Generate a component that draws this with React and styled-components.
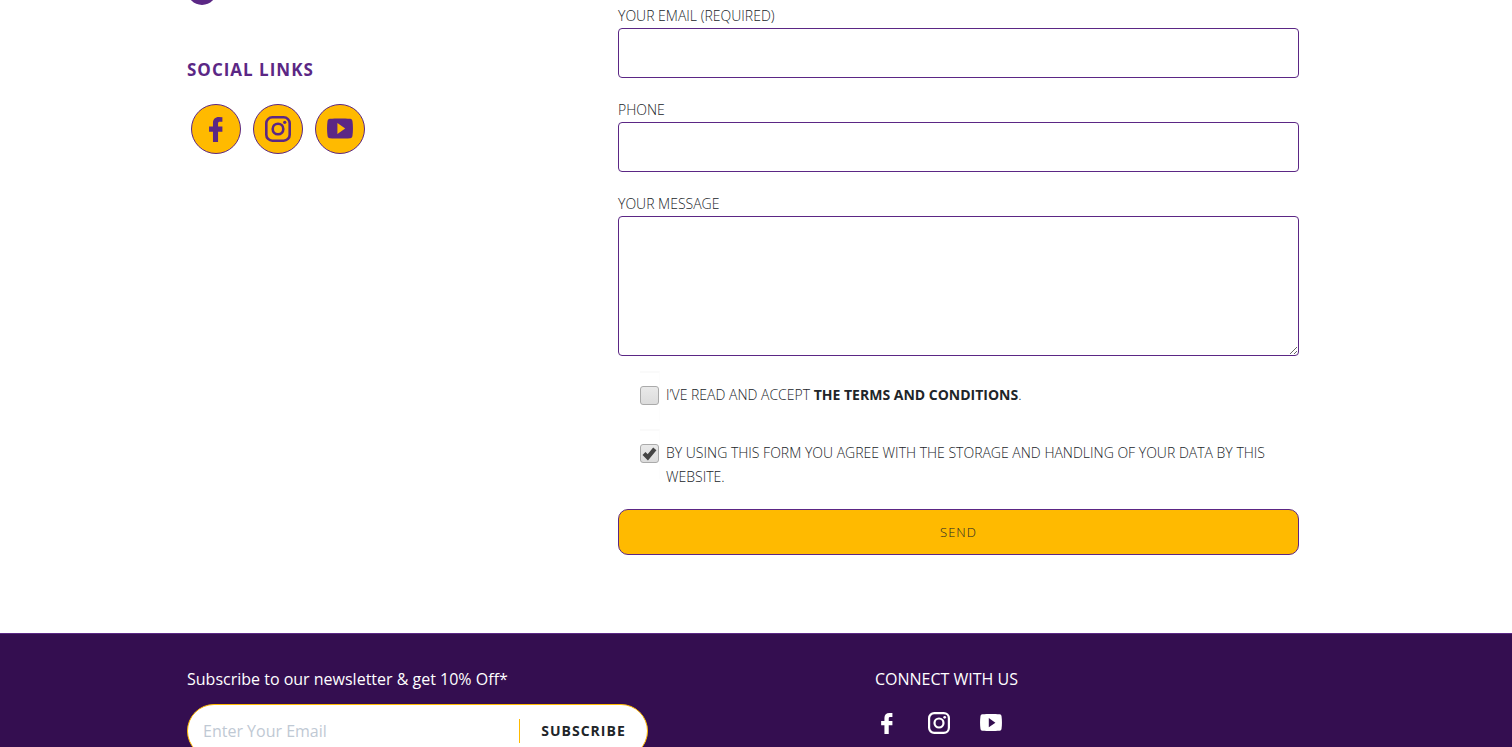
import React, {useState} from 'react';
import styled, {createGlobalStyle} from "styled-components";

const GlobalStyle = createGlobalStyle`
  * {
    box-sizing: border-box;
  }

  body {
    margin: 0;
    background: #fff;
    color: #212529;
    font-family: "Open Sans", sans-serif;
    font-size: 14px;
    line-height: 24px;
  }

  input, textarea, button {
    font: inherit;
    color: inherit;
  }
`;

const Page = styled.div`
  height: 100vh;
  overflow: hidden;
`;

const Container = styled.div`
  max-width: 1138px;
  margin: 0 auto;
`;

const ContactGrid = styled(Container)`
  display: grid;
  grid-template-columns: 431px 1fr;
  padding: 4px 26px 78px 0;
`;

const Aside = styled.aside`
  margin-top: -4px;

  h2 {
    margin: 52px 0 21px;
    color: #5b2785;
    font-size: 17px;
    font-weight: 700;
    line-height: 26px;
    letter-spacing: 1px;
  }
`;

const ContactBadge = styled.div`
  display: flex;
  align-items: flex-end;
  height: 5px;
  overflow: hidden;

  span {
    flex: none;
    width: 30px;
    height: 30px;
    border-radius: 50%;
    background: #5b2785;
  }
`;

const SocialList = styled.div`
  display: flex;
  gap: 12px;
  padding-left: 4px;
`;

const SocialLink = styled.a`
  display: flex;
  align-items: center;
  justify-content: center;
  width: 50px;
  height: 50px;
  border: 1px solid #5b2785;
  border-radius: 50%;
  background: #ffba00;
  color: #5b2785;
`;

const Form = styled.form`
  display: flex;
  flex-direction: column;
  font-weight: 300;
`;

const Field = styled.div`
  display: flex;
  flex-direction: column;
  margin-bottom: ${props => props.$last ? "15px" : "20px"};

  input, textarea {
    display: block;
    width: 100%;
    height: 50px;
    padding: 8px 16px;
    border: 1px solid #5b2785;
    border-radius: 4px;
    background: #fff;
    outline: none;
  }

  textarea {
    height: 140px;
    resize: vertical;
  }
`;

const CheckRow = styled.div`
  display: grid;
  grid-template-columns: 20px 1fr;
  column-gap: 6px;
  margin: 0 20px ${props => props.$last ? "20px" : "22px"} 22px;

  label {
    padding-top: 12px;
  }

  strong {
    font-weight: 700;
  }
`;

const CheckSlot = styled.span`
  position: relative;
  height: 50px;
  margin-bottom: -14px;
  padding-top: 13px;
  border-top: 2px solid #fafafa;
  border-right: 1px solid #fdfdfd;

  input {
    appearance: none;
    display: block;
    width: 19px;
    height: 19px;
    margin: 0;
    border: 1px solid #aaa;
    border-radius: 3px;
    background: linear-gradient(#e9e9e9, #dcdcdc);
  }

  svg {
    position: absolute;
    top: 15px;
    left: 2px;
    pointer-events: none;
  }
`;

const SendButton = styled.button`
  height: 46px;
  border: 1px solid #5b2785;
  border-radius: 10px;
  background: #ffba00;
  font-size: 13px;
  font-weight: 300;
  letter-spacing: 1px;
  cursor: pointer;
`;

const Footer = styled.footer`
  border-top: 1px solid #5b2785;
  background: #340e50;
  color: #fff;
  font-size: 16px;
`;

const FooterGrid = styled(Container)`
  display: grid;
  grid-template-columns: 688px 1fr;
  padding: 33px 0 40px;

  h3 {
    margin: 0;
    font-size: 16px;
    font-weight: 400;
    line-height: 24px;
  }
`;

const Newsletter = styled.form`
  display: flex;
  align-items: center;
  width: 461px;
  height: 54px;
  margin-top: 13px;
  padding-left: 15px;
  border: 1px solid #ffba00;
  border-radius: 27px;
  background: #fff;
  color: #212529;

  input {
    flex: 1;
    min-width: 0;
    height: 24px;
    padding: 0;
    border: 0;
    border-right: 1px solid #ffba00;
    background: none;
    outline: none;

    &::placeholder {
      color: #bfc9d4;
      opacity: 1;
    }
  }

  button {
    width: 127px;
    padding: 0;
    border: 0;
    background: none;
    font-size: 14px;
    font-weight: 700;
    letter-spacing: 1px;
    cursor: pointer;
  }
`;

const FooterSocial = styled.div`
  display: flex;
  gap: 30px;
  margin-top: 21px;
  padding-left: 1px;

  a {
    display: flex;
    color: #fff;
  }
`;

const FacebookIcon = ({size}) => (
    <svg width={size} height={size} viewBox="0 0 24 24" fill="currentColor" aria-hidden="true">
        <path d="M17.900 1.100v4.300h-2.300c-1.300 0-1.700.6-1.700 1.600v2.800h4v4.700h-4V24H9.200v-9.500H5.600V9.800h3.600V6.400C9.200 3 11.300 1 14.600 1z"/>
    </svg>
);

const InstagramIcon = ({size}) => (
    <svg width={size} height={size} viewBox="0 0 24 24" fill="none" stroke="currentColor" strokeWidth="2.4" aria-hidden="true">
        <rect x="1.2" y="1.2" width="21.6" height="21.6" rx="5.6"/>
        <circle cx="12" cy="12" r="4.900"/>
        <circle cx="18.2" cy="5.8" r="1.5" fill="currentColor" stroke="none"/>
    </svg>
);

const YoutubeIcon = ({size}) => (
    <svg width={size} height={size} viewBox="0 0 24 24" fill="currentColor" fillRule="evenodd" aria-hidden="true">
        <path d="M2.600 2.500C8 2.100 16 2.100 21.400 2.500c1.300.1 1.900.8 2.100 2.200.6 4.300.6 9.300 0 13.600-.2 1.400-.8 2.100-2.100 2.200-5.400.4-13.400.4-18.800 0C1.300 20.400.7 19.700.5 18.300c-.6-4.300-.6-9.300 0-13.600C.7 3.300 1.300 2.600 2.600 2.500zM9.600 6.500v10.200l7.200-5.100z"/>
    </svg>
);

const socials = [
    {name: "Facebook", Icon: FacebookIcon},
    {name: "Instagram", Icon: InstagramIcon},
    {name: "YouTube", Icon: YoutubeIcon},
];

const CheckItem = ({id, defaultChecked = false, last, children}) => {
    const [checked, setChecked] = useState(defaultChecked);

    return (
        <CheckRow $last={last}>
            <CheckSlot>
                <input id={id} type="checkbox" checked={checked} onChange={e => setChecked(e.target.checked)}/>
                {checked && (
                    <svg width="15" height="15" viewBox="0 0 15 15" aria-hidden="true">
                        <path d="M2 7.500L5.800 11.300L12.800 2.800" fill="none" stroke="#444" strokeWidth="4.200"/>
                    </svg>
                )}
            </CheckSlot>
            <label htmlFor={id}>{children}</label>
        </CheckRow>
    );
};

const App = () => {
    return (
        <Page>
            <GlobalStyle/>
            <ContactGrid as="main">
                <Aside>
                    <ContactBadge><span/></ContactBadge>
                    <h2>SOCIAL LINKS</h2>
                    <SocialList>
                        {socials.map(({name, Icon}) => (
                            <SocialLink key={name} href="#" aria-label={name}>
                                <Icon size={26}/>
                            </SocialLink>
                        ))}
                    </SocialList>
                </Aside>
                <Form onSubmit={e => e.preventDefault()}>
                    <Field>
                        <label htmlFor="email">YOUR EMAIL (REQUIRED)</label>
                        <input id="email" type="email"/>
                    </Field>
                    <Field>
                        <label htmlFor="phone">PHONE</label>
                        <input id="phone" type="tel"/>
                    </Field>
                    <Field $last>
                        <label htmlFor="message">YOUR MESSAGE</label>
                        <textarea id="message"/>
                    </Field>
                    <CheckItem id="terms">
                        I’VE READ AND ACCEPT <strong>THE TERMS AND CONDITIONS</strong>.
                    </CheckItem>
                    <CheckItem id="privacy" defaultChecked last>
                        BY USING THIS FORM YOU AGREE WITH THE STORAGE AND HANDLING OF YOUR DATA BY THIS WEBSITE.
                    </CheckItem>
                    <SendButton type="submit">SEND</SendButton>
                </Form>
            </ContactGrid>
            <Footer>
                <FooterGrid>
                    <div>
                        <h3>Subscribe to our newsletter &amp; get 10% Off*</h3>
                        <Newsletter onSubmit={e => e.preventDefault()}>
                            <input type="email" placeholder="Enter Your Email" aria-label="Enter Your Email"/>
                            <button type="submit">SUBSCRIBE</button>
                        </Newsletter>
                    </div>
                    <div>
                        <h3>CONNECT WITH US</h3>
                        <FooterSocial>
                            {socials.map(({name, Icon}) => (
                                <a key={name} href="#" aria-label={name}>
                                    <Icon size={22}/>
                                </a>
                            ))}
                        </FooterSocial>
                    </div>
                </FooterGrid>
            </Footer>
        </Page>
    );
};

export default App;
